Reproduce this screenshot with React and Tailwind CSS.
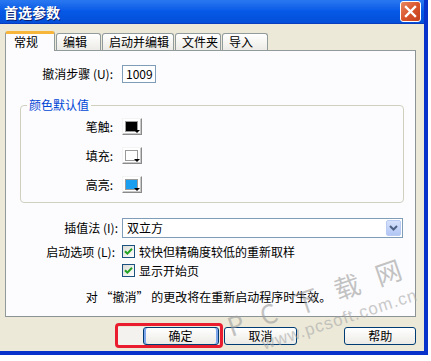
import React from "react";

const FONT = { fontFamily: '"Noto Sans CJK SC", "Noto Sans", sans-serif' };

function Swatch({ color }) {
  return (
    <div className="relative w-[20px] h-[17px] bg-white border border-t-[#f4f4f4] border-l-[#f4f4f4] border-r-[#8a8a8a] border-b-[#8a8a8a] shadow-[inset_-1px_-1px_0_#c8c8c8]">
      <div
        className="ml-[2px] mt-[2px] w-[13px] h-[11px] border border-[#9a9a9a]"
        style={{ backgroundColor: color }}
      />
      <div className="absolute right-[1px] bottom-[1px] w-0 h-0 border-l-[3px] border-r-[3px] border-t-[3px] border-l-transparent border-r-transparent border-t-black" />
    </div>
  );
}

function Check() {
  return (
    <div className="w-[13px] h-[13px] border border-[#1c5180] bg-gradient-to-br from-[#dcdcd7] to-white flex items-center justify-center">
      <svg width="9" height="9" viewBox="0 0 9 9">
        <path d="M1 4.2 L3.4 6.6 L8 1.8" stroke="#21a121" strokeWidth="2" fill="none" />
      </svg>
    </div>
  );
}

function Tab({ w, children }) {
  return (
    <div
      className="h-[17px] rounded-t-[3px] border border-b-0 border-[#919b9c] bg-gradient-to-b from-white to-[#ecebe6] text-[12px] leading-[16px] pl-[6px] text-black whitespace-nowrap"
      style={{ width: w }}
    >
      {children}
    </div>
  );
}

function XpButton({ children, className = "" }) {
  return (
    <div
      className={
        "h-[18px] rounded-[3px] border border-[#003c74] bg-gradient-to-b from-white to-[#ecebe6] flex items-center justify-center text-[12px] leading-[14px] text-black " +
        className
      }
    >
      {children}
    </div>
  );
}

export default function App() {
  return (
    <div className="relative w-[431px] h-[361px] bg-white overflow-hidden" style={FONT}>
      <div className="w-[428px] h-[355px] border-r-[4px] border-b-[4px] border-[#0832c9] bg-[#ece9d8] flex flex-col">
        {/* Title bar */}
        <div className="h-[24px] shrink-0 flex items-center justify-between pl-[4px] pr-[3px] bg-gradient-to-b from-[#2a78f0] via-[#0558e6] to-[#0550d8] border-b border-[#0a3cc0]">
          <span className="text-white font-bold text-[14px] leading-[16px] [text-shadow:1px_1px_0_#0a1e6e]">首选参数</span>
          <div className="w-[21px] h-[21px] rounded-[3px] border border-white bg-gradient-to-br from-[#e88760] via-[#d9542b] to-[#c3401c] flex items-center justify-center">
            <svg width="13" height="13" viewBox="0 0 13 13">
              <path d="M2 2 L11 11 M11 2 L2 11" stroke="white" strokeWidth="2.4" strokeLinecap="square" />
            </svg>
          </div>
        </div>

        {/* Face */}
        <div className="flex-1 flex flex-col pl-[5px] pr-[8px] pt-[7px]">
          {/* Tabs */}
          <div className="h-[19px] flex items-end gap-[1px]">
            <div className="relative z-10 w-[50px] h-[20px] mb-[-1px] rounded-t-[3px] border-x border-[#919b9c] border-t-[3px] border-t-[#f7b53a] bg-[#fcfcfe] text-[12px] leading-[15px] pl-[8px] text-black">
              常规
            </div>
            <Tab w={45}>编辑</Tab>
            <Tab w={72}>启动并编辑</Tab>
            <Tab w={46}>文件夹</Tab>
            <Tab w={46}>导入</Tab>
          </div>

          {/* Panel */}
          <div className="w-[411px] h-[267px] border border-[#919b9c] border-r-[#8c9394] border-b-[#8c9394] bg-[#fcfcfe] flex flex-col text-[12px] leading-[14px] text-black">
            {/* Undo steps */}
            <div className="mt-[14px] h-[18px] flex items-center">
              <div className="w-[107px] text-right whitespace-nowrap">撤消步骤 (U):</div>
              <div className="ml-[9px] w-[34px] h-[18px] border border-[#7f9db9] bg-white pl-[3px] leading-[16px]">1009</div>
            </div>

            {/* Group box */}
            <fieldset className="mt-[15px] ml-[14px] mr-[11px] border border-[#d0d0bf] rounded-[4px] pt-[6px] pb-[9px] flex flex-col gap-[12px]">
              <legend className="ml-[6px] px-[2px] text-[#0046d5] leading-[14px]">颜色默认值</legend>
              <div className="h-[17px] flex items-center">
                <div className="w-[92px] text-right">笔触:</div>
                <div className="ml-[9px]"><Swatch color="#000000" /></div>
              </div>
              <div className="h-[17px] flex items-center">
                <div className="w-[92px] text-right">填充:</div>
                <div className="ml-[9px]"><Swatch color="#ffffff" /></div>
              </div>
              <div className="h-[17px] flex items-center">
                <div className="w-[92px] text-right">高亮:</div>
                <div className="ml-[9px]"><Swatch color="#1a9ef0" /></div>
              </div>
            </fieldset>

            {/* Interpolation */}
            <div className="mt-[15px] h-[20px] flex items-center">
              <div className="w-[112px] text-right whitespace-nowrap">插值法 (I):</div>
              <div className="ml-[4px] w-[281px] h-[20px] border border-[#7f9db9] bg-white flex items-center justify-between pl-[4px] pr-[1px]">
                <span>双立方</span>
                <div className="w-[15px] h-[16px] rounded-[2px] border border-[#b9caf3] bg-gradient-to-b from-[#d6e2fb] to-[#b2c6f5] flex items-center justify-center">
                  <svg width="9" height="6" viewBox="0 0 9 6">
                    <path d="M1 1 L4.5 4.5 L8 1" stroke="#4d6185" strokeWidth="2" fill="none" />
                  </svg>
                </div>
              </div>
            </div>

            {/* Startup options */}
            <div className="mt-[7px] flex flex-col gap-[6px]">
              <div className="h-[13px] flex items-center">
                <div className="w-[109px] text-right whitespace-nowrap">启动选项 (L):</div>
                <div className="ml-[7px]"><Check /></div>
                <span className="ml-[4px]">较快但精确度较低的重新取样</span>
              </div>
              <div className="h-[13px] flex items-center">
                <div className="ml-[116px]"><Check /></div>
                <span className="ml-[4px]">显示开始页</span>
              </div>
            </div>

            <div className="mt-[13px] text-center pr-[4px]">对 “撤消” 的更改将在重新启动程序时生效。</div>
          </div>

          {/* Buttons */}
          <div className="relative mt-[10px] h-[18px] flex items-center">
            <div className="ml-[113px] h-[18px] w-[101px] bg-[#f3f2ee] flex justify-end">
              <XpButton className="w-[76px] shadow-[inset_2px_0_0_#7ea6ea,inset_-2px_0_0_#7ea6ea]">确定</XpButton>
            </div>
            <XpButton className="ml-[5px] w-[74px]">取消</XpButton>
            <XpButton className="ml-[47px] w-[72px]">帮助</XpButton>
            <div className="pointer-events-none absolute left-[110px] top-[-4px] w-[108px] h-[25px] border-[3px] border-[#ea1d2f] rounded-[4px]" />
          </div>
        </div>
      </div>

      {/* Watermark */}
      <div className="pointer-events-none absolute left-[317px] top-[296px] -translate-x-1/2 -translate-y-1/2 -rotate-[19deg] whitespace-nowrap text-[26px] leading-[28px] text-[#9c9c9c] opacity-60 tracking-[6px]">
        P C 下 载 网
      </div>
      <div
        className="pointer-events-none absolute left-[340px] top-[320px] -translate-x-1/2 -translate-y-1/2 -rotate-[18deg] whitespace-nowrap text-[17px] leading-[18px] text-[#a8a8a8] opacity-60 tracking-[1px]"
        style={{ fontFamily: '"Liberation Sans", sans-serif' }}
      >
        www.pcsoft.com.cn
      </div>
    </div>
  );
}
